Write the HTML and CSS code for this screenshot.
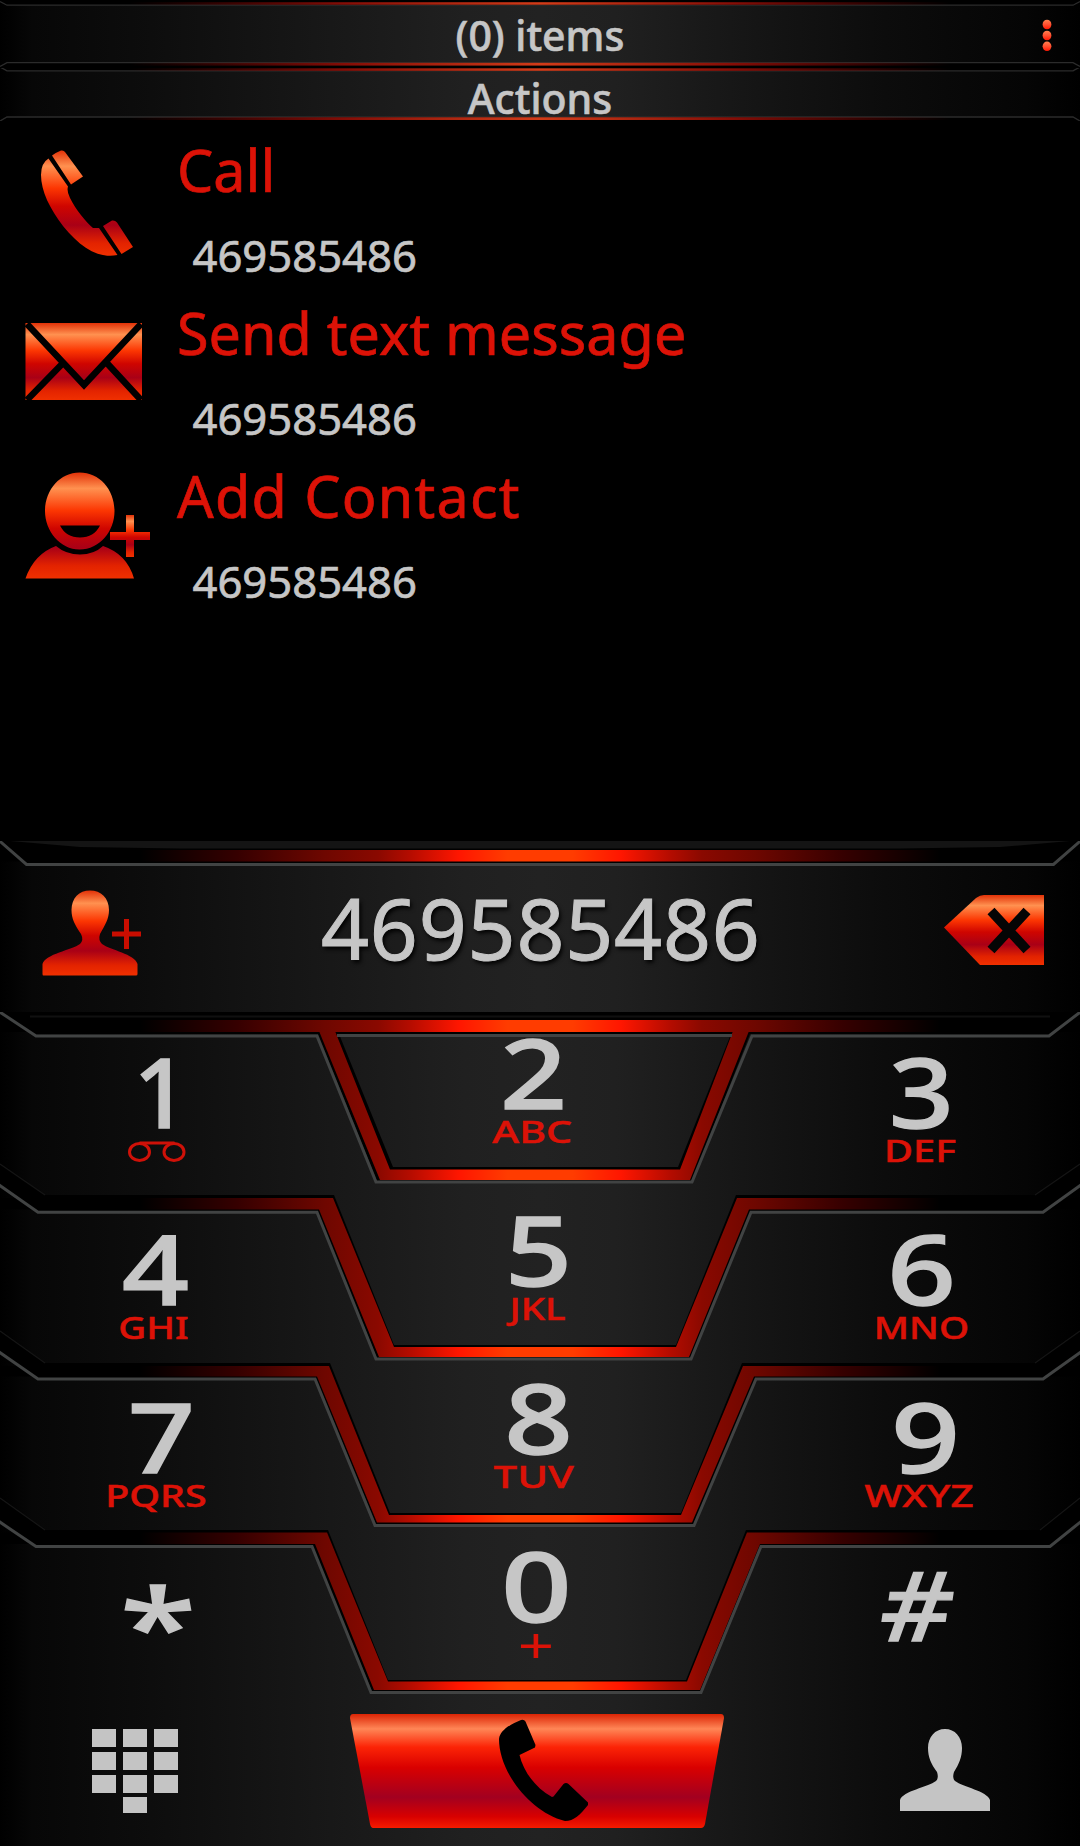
FILE: index.html
```html
<!DOCTYPE html>
<html lang="en">
<head>
<meta charset="utf-8">
<title>Phone</title>
<link rel="stylesheet" href="styles.css">
</head>
<body>
<svg class="defs" width="0" height="0" aria-hidden="true">
  <defs>
    <linearGradient id="gloss" x1="0" y1="0" x2="0" y2="1">
      <stop offset="0" stop-color="#e23208"/><stop offset=".15" stop-color="#ff9150"/>
      <stop offset=".36" stop-color="#fc3602"/><stop offset=".53" stop-color="#cf0500"/>
      <stop offset=".71" stop-color="#a90016"/><stop offset=".88" stop-color="#e32300"/>
      <stop offset="1" stop-color="#f03000"/>
    </linearGradient>
    <linearGradient id="button" x1="0" y1="0" x2="0" y2="1">
      <stop offset="0" stop-color="#dc2405"/><stop offset=".13" stop-color="#ff8656"/>
      <stop offset=".29" stop-color="#fc2406"/><stop offset=".47" stop-color="#d90000"/>
      <stop offset=".73" stop-color="#a20020"/><stop offset=".9" stop-color="#d80000"/>
      <stop offset="1" stop-color="#f51b00"/>
    </linearGradient>
    <linearGradient id="bead" x1="0" y1="0" x2="0" y2="1">
      <stop offset="0" stop-color="#ff8050"/><stop offset=".5" stop-color="#ff5030"/><stop offset="1" stop-color="#ff1400"/>
    </linearGradient>
    <linearGradient id="glow" gradientUnits="userSpaceOnUse" x1="0" y1="0" x2="1080" y2="0">
      <stop offset=".13" stop-color="#000"/><stop offset=".22" stop-color="#360000"/>
      <stop offset=".3" stop-color="#6e0700"/><stop offset=".35" stop-color="#8a0900"/>
      <stop offset=".38" stop-color="#b50c00"/><stop offset=".425" stop-color="#ff1600"/>
      <stop offset=".47" stop-color="#ff3c00"/><stop offset=".53" stop-color="#ff3c00"/>
      <stop offset=".575" stop-color="#ff1600"/><stop offset=".62" stop-color="#b50c00"/>
      <stop offset=".65" stop-color="#8a0900"/><stop offset=".7" stop-color="#6e0700"/>
      <stop offset=".78" stop-color="#360000"/><stop offset=".87" stop-color="#000"/>
    </linearGradient>
    <linearGradient id="hairline" gradientUnits="userSpaceOnUse" x1="0" y1="0" x2="1080" y2="0">
      <stop offset=".12" stop-color="#700" stop-opacity="0"/><stop offset=".32" stop-color="#850d06"/>
      <stop offset=".5" stop-color="#d23b18"/>
      <stop offset=".68" stop-color="#850d06"/><stop offset=".88" stop-color="#700" stop-opacity="0"/>
    </linearGradient>
  </defs>
</svg>

<main class="phone">
  <header class="bar bar-top">
    <svg class="backdrop" viewBox="0 0 1080 68" width="1080" height="68">
      <path class="black" d="M0 0H1080V1L1073 5H7L0 1ZM0 68H1080V67L1073 63H7L0 67Z"/>
      <path class="edge" d="M0 1.5L7 5.2H1073L1080 1.5M0 66.5L7 62.7H1073L1080 66.5"/>
      <rect x="0" y="2.2" width="1080" height="2.5" fill="url(#hairline)"/>
      <rect x="0" y="62.8" width="1080" height="2.8" fill="url(#hairline)"/>
    </svg>
    <h1 class="bar-title">(0) items</h1>
    <svg class="more" viewBox="0 0 10 34" width="10" height="34">
      <ellipse cx="5" cy="5.500" rx="4.400" ry="4.800"/><ellipse cx="5" cy="16.500" rx="4.400" ry="4.800"/><ellipse cx="5" cy="27.300" rx="4.400" ry="4.800"/>
    </svg>
  </header>

  <div class="bar bar-sub">
    <svg class="backdrop" viewBox="0 0 1080 53" width="1080" height="53">
      <path class="black" d="M0 0H1080V-1L1073 3H7L0 -1ZM0 53H1080V53L1073 49H7L0 53Z"/>
      <path class="edge" d="M0 -1L7 2.800H1073L1080 -1M0 53L7 49H1073L1080 53"/>
      <rect x="0" y="0.300" width="1080" height="2.500" fill="url(#hairline)"/>
      <rect x="0" y="49.300" width="1080" height="2.700" fill="url(#hairline)"/>
    </svg>
    <h2 class="bar-title">Actions</h2>
  </div>

  <ul class="actions">
    <li class="action">
      <svg class="action-icon" viewBox="0 0 160 163" width="160" height="163">
        <path fill="url(#gloss)" d="M52 35.500Q57 32 61 30.500Q64 30 65 32L83 56.500L71 64.500ZM48.500 38.500L68 66.500Q66.500 71 70 78C76 90 86 102 93 108L99 108L117.500 135C98 139 80 127 63 106C50 89 41 71 41 55Q41 43 48.500 38.500ZM103 106L112 100.500Q115 100 117 102.500L133 127L121.500 134Z"/>
      </svg>
      <div class="action-text"><h3>Call</h3><p>469585486</p></div>
    </li>
    <li class="action">
      <svg class="action-icon" viewBox="0 0 160 163" width="160" height="163">
        <rect x="25.500" y="40" width="116.500" height="77" fill="url(#gloss)"/>
        <path d="M27 41L84 102L141 41M27 117L65 78M141 117L105 78" fill="none" stroke="#000" stroke-width="6.500"/>
      </svg>
      <div class="action-text"><h3>Send text message</h3><p>469585486</p></div>
    </li>
    <li class="action">
      <svg class="action-icon" viewBox="0 0 160 163" width="160" height="163">
        <path fill="url(#gloss)" fill-rule="evenodd" d="M79.500 26.500C100 26.500 114.500 44 114.500 65C114.500 85 100 103.500 79.500 103.500C60 103.500 45 85 45 65C45 44 60 26.500 79.500 26.500ZM60 79.500Q66 91.500 80 91.500Q94 91.500 100 79.500ZM56 100Q66 108.500 80 108.500Q94 108.500 103 100Q127 108 134 132.500H25.500Q34 108 56 100Z"/>
        <path fill="url(#gloss)" d="M126 69H134V86H150V94H134V111H126V94H110V86H126Z"/>
      </svg>
      <div class="action-text"><h3 class="wide">Add Contact</h3><p>469585486</p></div>
    </li>
  </ul>

  <section class="entry">
    <svg class="backdrop" viewBox="0 0 1080 171" width="1080" height="171">
      <path class="black" d="M0 0H1080L1054 22H26Z"/>
      <path d="M10 0H1070L1000 6L900 7.500H180L80 6Z" fill="#141414"/>
      <rect x="0" y="9" width="1080" height="11.500" fill="url(#glow)"/>
      <path class="rim" d="M-1 -.5L26.500 23.500H1053.500L1081 -.5"/>
    </svg>
    <div class="entry-row">
      <svg class="add-person" viewBox="0 0 100 86" width="100" height="86">
        <path fill="url(#gloss)" d="M1.500 85.500Q.5 85.500 .5 84V74C3 64 30 60 38 54Q42 50 39 44C33 35 29.500 29 29.500 20C29.500 8 37 .5 48 .5S67 8 67 20C67 29 63 35 58 44Q56 50 60 54C68 60 93 64 95.500 74V84Q95.500 85.500 94 85.500Z"/>
      </svg>
      <svg class="plus" viewBox="0 0 30 32" width="30" height="32"><path d="M12 1H17V13.500H29V18.500H17V31H12V18.500H0V13.500H12Z" fill="#c90d00"/></svg>
      <output class="number">469585486</output>
      <svg class="erase" viewBox="0 0 100 70" width="100" height="70">
        <path fill="url(#gloss)" d="M0 32.500L32 3Q36 0 40 0H100V70H36Z"/>
        <path d="M47 16L83 55M83 16L47 55" stroke="#050505" stroke-width="9.500"/>
      </svg>
    </div>
  </section>

  <section class="keypad">
    <svg class="backdrop" viewBox="0 1012 1080 834" width="1080" height="834">
      <path class="black" d="M0 1012H1080L1049 1034H36Z"/>
      <path d="M30 1016.500H1050" stroke="#101010" stroke-width="2"/>
      <g class="black">
        <path d="M0 1164L45 1195H334L394 1345H676L736 1195H1035L1080 1164V1186L1043 1211H751L691 1358H377L317 1211H38L0 1186Z"/>
        <path d="M0 1331L45 1363H330L390 1513H681L742 1363H1035L1080 1331V1353L1043 1378H756L694 1524H376L316 1378H38L0 1353Z"/>
        <path d="M0 1498L45 1530H328L388 1680H686L746 1530H1040L1080 1498V1522L1050 1545H761L701 1691H372L312 1545H36L0 1522Z"/>
        <path d="M318 1034L377 1181H692L750 1034H731L678 1167H393L339 1034Z"/>
      </g>
      <g fill="url(#glow)">
        <rect x="0" y="1020" width="1080" height="12"/>
        <path d="M319 1031L380 1180H690L749 1031H733L680 1169.500H390L335 1031Z"/>
        <path d="M0 1198H333L394 1347H676L737 1198H1080V1209.500H749L689 1357H379L319 1209.500H0Z"/>
        <path d="M0 1366H329L389 1515H681L743 1366H1080V1376.500H754L692 1522.500H377L317 1376.500H0Z"/>
        <path d="M0 1532.500H327L388 1681.500H687L747 1532.500H1080V1544H760L700 1690H374L315 1544H0Z"/>
      </g>
      <g class="rim">
        <path d="M-1 1011.500L36 1036H317L376 1182H692L752 1036H1049L1081 1011.500"/>
        <path d="M337 1035.500H732"/>
        <path d="M-1 1185L38 1212.300H317L376 1359H691L751 1212.300H1043L1081 1185"/>
        <path d="M-1 1352L38 1379H315L375 1525.500H694L756 1379H1043L1081 1352"/>
        <path d="M-1 1521.500L36 1546.500H312L371 1692.500H701L761 1546.500H1050L1081 1521.500"/>
      </g>
      <path class="shade-line" d="M0 1164L45 1195M1035 1195L1080 1164M0 1331L45 1363M1035 1363L1080 1331M0 1498L45 1530M1040 1530L1080 1498"/>
    </svg>

    <div class="keys">
      <button class="key side k1"><b>1</b>
        <svg class="voicemail" viewBox="0 0 58 21" width="58" height="21"><path d="M11.500 2H46.500"/><ellipse cx="11.500" cy="11" rx="10" ry="8.500"/><ellipse cx="46" cy="11" rx="10" ry="8.500"/></svg>
      </button>
      <button class="key k2"><b>2</b><i>ABC</i></button>
      <button class="key side k3"><b>3</b><i>DEF</i></button>
      <button class="key side k4"><b>4</b><i>GHI</i></button>
      <button class="key k5"><b>5</b><i>JKL</i></button>
      <button class="key side k6"><b>6</b><i>MNO</i></button>
      <button class="key side k7"><b>7</b><i>PQRS</i></button>
      <button class="key k8"><b>8</b><i>TUV</i></button>
      <button class="key side k9"><b>9</b><i>WXYZ</i></button>
      <button class="key side star"><b>*</b></button>
      <button class="key k0"><b>0</b><i>+</i></button>
      <button class="key side hash"><b>#</b></button>

      <button class="tool">
        <svg class="pad-icon" viewBox="0 0 86 85" width="86" height="85"><path fill="#c4c4c4" d="M0 0h24v18H0zM31 0h24v18H31zM62 0h24v18H62zM0 23h24v18H0zM31 23h24v18H31zM62 23h24v18H62zM0 46h24v18H0zM31 46h24v18H31zM62 46h24v18H62zM31 68h24v16H31z"/></svg>
      </button>
      <button class="tool call">
        <svg viewBox="350 1715 374 114" width="374" height="114">
          <path fill="url(#button)" d="M353 1715H721Q724 1715 724 1719L705 1825Q704 1829 701 1829H373Q371 1829 370 1825L350 1719Q350 1715 353 1715Z"/>
          <path d="M521 1721Q524 1720 525.500 1722.500L535.500 1746L535 1748.500L519.500 1756C523 1771 534 1788 552 1798L553.500 1797.500L563.500 1785Q566 1783 568.500 1785L588 1803.500L588 1806C580 1816 574 1822 565 1822C530 1813 499 1773 499 1740C500 1731 511 1725 521 1721Z"/>
        </svg>
      </button>
      <button class="tool">
        <svg class="contact-icon" viewBox="0 0 90 82" width="90" height="82"><path fill="#c4c4c4" d="M0 82V71C3 62 28 58 36 52Q39 49 37 43C31 35 28 28 28 19C28 8 35 0 45 0S62 8 62 19C62 28 59 35 54 43Q52 49 55 52C63 58 87 62 90 71V82Z"/></svg>
      </button>
    </div>
  </section>
</main>
</body>
</html>
```
FILE: styles.css
```css
* { box-sizing: border-box; margin: 0; padding: 0; }

body {
  width: 1080px;
  background: #000;
  color: #c6c6c6;
  font-family: "Noto Sans", "Open Sans", sans-serif;
}

.defs { display: block; }
svg { display: block; }

.phone {
  display: flex;
  flex-direction: column;
  width: 1080px;
  height: 1846px;
  overflow: hidden;
}

/* Panels share a dark surface that lightens toward the middle */
.bar, .entry, .keypad {
  display: grid;
  background: linear-gradient(90deg, #000 0, #070707 3%, #0d0d0d 14%, #151515 26%, #202020 43%, #222 50%, #202020 57%, #151515 70%, #0c0c0c 82%, #050505 95%, #000 100%);
}
.backdrop { grid-area: 1 / 1; }
.black { fill: #000; }
.edge { fill: none; stroke: #2b2b2b; stroke-width: 1.3; }
.rim { fill: none; stroke: #414343; stroke-width: 3; }
.shade-line { fill: none; stroke: #151515; stroke-width: 1.2; }

/* Title bars */
.bar-title {
  grid-area: 1 / 1;
  justify-self: center;
  font-size: 41px;
  font-weight: 500;
  line-height: 56px;
  -webkit-text-stroke: 0.6px currentColor;
}
.bar-top { height: 68px; }
.bar-top .bar-title { padding-top: 7px; }
.bar-sub { height: 53px; }
.bar-sub .bar-title { line-height: 46px; padding-top: 7px; }
.more {
  grid-area: 1 / 1;
  justify-self: end;
  margin: 19px 28px 0 0;
  fill: url(#bead);
}

/* Contact actions */
.actions { list-style: none; height: 720px; }
.action { display: flex; height: 163px; }
.action-icon { flex: none; margin: -1px 17px 0 0; }
.action-text h3 {
  padding-top: 9px;
  color: #dc1207;
  font-size: 57.5px;
  font-weight: 400;
  line-height: 80px;
  -webkit-text-stroke: 0.7px currentColor;
}
.action-text h3.wide { letter-spacing: 1.2px; }
.action-text p {
  margin: 15px 0 0 15.5px;
  font-size: 43.6px;
  line-height: 60px;
  -webkit-text-stroke: 0.7px currentColor;
}

/* Entered number */
.entry { height: 171px; }
.entry-row {
  grid-area: 1 / 1;
  display: flex;
  align-items: flex-start;
}
.add-person { margin: 49px 0 0 42px; }
.plus { margin: 77px 0 0 -30px; }
.number {
  width: 446px;
  margin: 37px 0 0 179px;
  font-size: 84px;
  letter-spacing: 0.8px;
  line-height: 100px;
  text-shadow: 2px 3px 4px #000;
  -webkit-text-stroke: 1px currentColor;
}
.erase { margin: 54px 0 0 177px; }

/* Keypad */
.keypad { height: 834px; }
.keys {
  grid-area: 1 / 1;
  display: grid;
  grid-template-columns: 310px 456px 314px;
  grid-template-rows: 177px 168px 168px 168px 147px;
  padding-top: 6px;
}
.key {
  display: flex;
  flex-direction: column;
  align-items: center;
  padding-top: 19px;
  border: 0;
  background: none;
  color: #c6c6c6;
  font-family: inherit;
}
.key.side { padding-top: 38px; }
.key b {
  font-size: 96px;
  font-weight: 500;
  line-height: 70px;
  transform: translateX(var(--shift, 0)) scaleX(var(--stretch, 1.22));
  -webkit-text-stroke: 1.4px currentColor;
}
.key i {
  margin-top: 9px;
  color: #dc1207;
  font-size: 31px;
  font-style: normal;
  font-weight: 500;
  line-height: 30px;
  transform: translateX(var(--label-shift, 0)) scaleX(var(--label-stretch, 1.24));
  -webkit-text-stroke: 0.5px currentColor;
}
.k1 { --shift: 6px; --stretch: 1; }
.k2 { --shift: -5px; --label-shift: -6px; --label-stretch: 1.32; }
.k3 { --shift: -2px; --stretch: 1.18; --label-shift: -3px; --label-stretch: 1.28; }
.k4 { --label-shift: -2px; }
.k6 { --shift: -2px; --stretch: 1.25; --label-shift: -2px; }
.k7 { --shift: 6px; --label-shift: 1px; --label-stretch: 1.27; }
.k8 { --stretch: 1.25; --label-shift: -4px; --label-stretch: 1.35; }
.k9 { --shift: 2px; --stretch: 1.25; --label-shift: -4px; --label-stretch: 1.3; }
.k0 { --shift: -2px; --stretch: 1.28; --label-shift: -2px; --label-stretch: 1.3; }
.k0 i { font-size: 49px; font-weight: 400; -webkit-text-stroke: 0; }
.star { --shift: 3px; --stretch: 1.3; }
.star b { padding-top: 20px; font-size: 106px; }
.hash b { transform: translateX(-5px) scaleX(1.16) skewX(-7deg); }
.voicemail {
  margin: 15px 0 0 3px;
  fill: none;
  stroke: #cf1108;
  stroke-width: 3;
}

.tool {
  display: flex;
  justify-content: center;
  border: 0;
  background: none;
}
.pad-icon { margin: 30px 40px 0 0; }
.call svg { margin: 15px 2px 0 0; }
.contact-icon { margin: 30px 0 0 44px; }
```
